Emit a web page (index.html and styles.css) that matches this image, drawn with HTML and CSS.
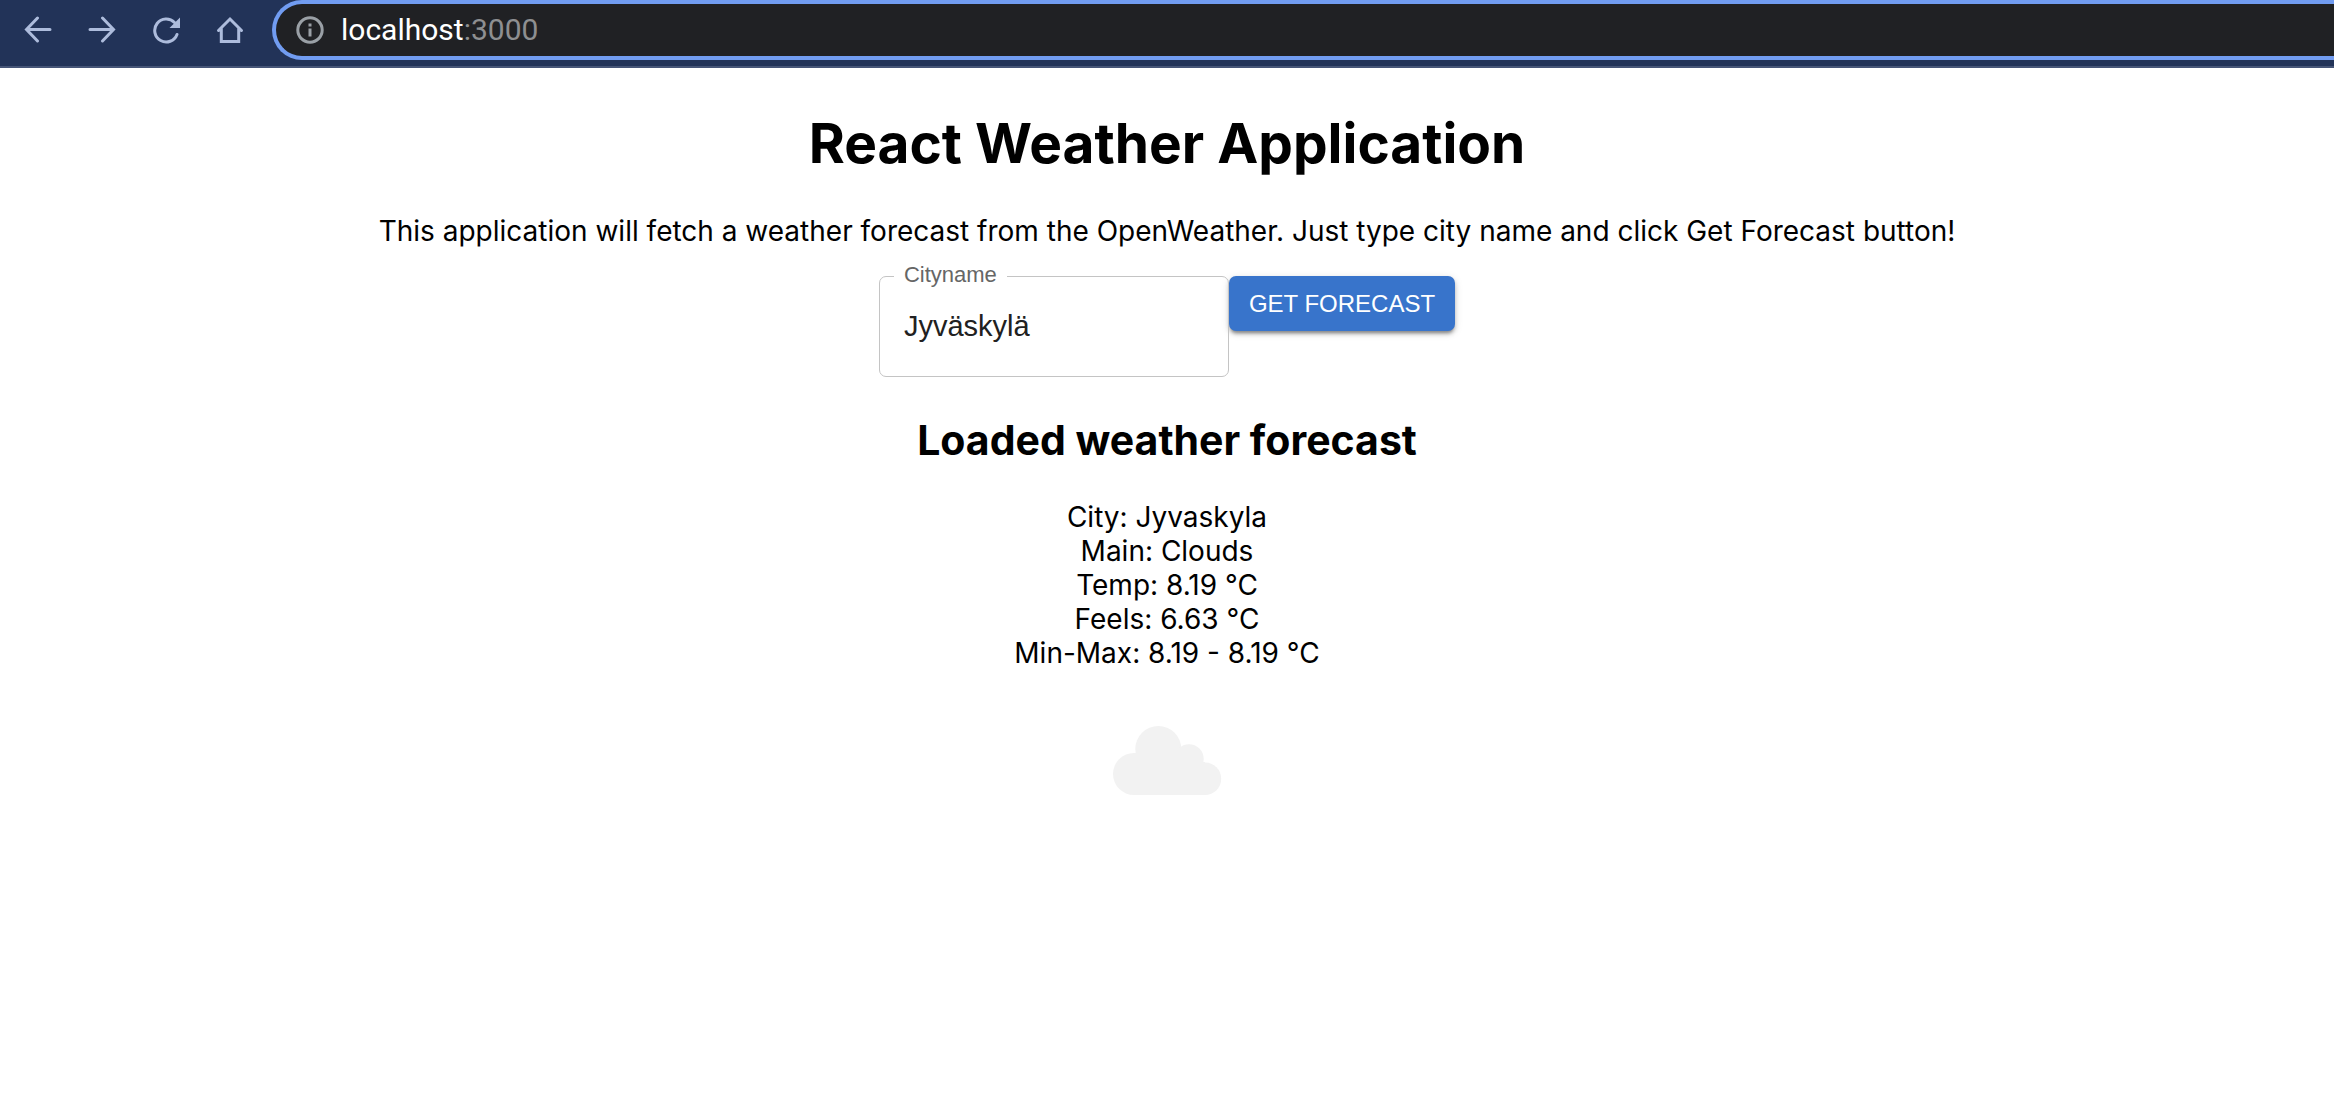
FILE: index.html
```html
<!DOCTYPE html>
<html lang="en">
<head>
  <meta charset="utf-8">
  <title>React Weather Application</title>
  <link rel="stylesheet" href="styles.css">
</head>
<body>
  <header class="toolbar">
    <nav class="toolbar-nav" aria-label="Browser navigation">
      <button class="nav-button" type="button" aria-label="Back">
        <svg class="nav-icon" viewBox="0 0 28 28"><path d="M26 13.500H3M13.500 2 2.500 13.500 13.500 25"/></svg>
      </button>
      <button class="nav-button" type="button" aria-label="Forward">
        <svg class="nav-icon" viewBox="0 0 28 28"><path d="M2 13.500H25M14.500 2 25.500 13.500 14.500 25"/></svg>
      </button>
      <button class="nav-button" type="button" aria-label="Reload">
        <svg class="nav-icon" viewBox="0 0 28 28"><path d="M25 18.500A11.500 11.500 0 1 1 22.500 6.500"/><path class="solid" d="M28 1.500V12H17.500Z"/></svg>
      </button>
      <button class="nav-button" type="button" aria-label="Home">
        <svg class="nav-icon" viewBox="0 0 28 28"><path d="M2.500 14.500 14 3 25.500 14.500M5.300 12V25.500H22.700V12"/></svg>
      </button>
    </nav>
    <div class="address-bar">
      <svg class="info-icon" viewBox="0 0 28 28"><circle cx="14" cy="14" r="12.200"/><path class="solid" d="M12.500 7.500h3v3h-3zM12.500 12.500h3v8h-3z"/></svg>
      <span class="address"><span class="host">localhost</span>:3000</span>
    </div>
  </header>

  <main class="app">
    <h1 class="title">React Weather Application</h1>
    <p class="intro">This application will fetch a weather forecast from the OpenWeather. Just type city name and click Get Forecast button!</p>
    <form class="search">
      <div class="field">
        <label class="field-label" for="city">Cityname</label>
        <input class="field-input" id="city" type="text" value="Jyväskylä">
      </div>
      <button class="submit" type="button">GET FORECAST</button>
    </form>
    <section class="forecast">
      <h2 class="subtitle">Loaded weather forecast</h2>
      <div>City: Jyvaskyla</div>
      <div>Main: Clouds</div>
      <div>Temp: 8.19 °C</div>
      <div>Feels: 6.63 °C</div>
      <div>Min-Max: 8.19 - 8.19 °C</div>
      <svg class="weather-icon" viewBox="0 0 176 176" role="img" aria-label="Clouds">
        <circle cx="55" cy="102" r="21"/>
        <circle cx="79.300" cy="77" r="23"/>
        <circle cx="110" cy="87" r="14.700"/>
        <circle cx="126" cy="106.800" r="16.200"/>
        <path d="M55 81H110V90H126V123H55Z"/>
      </svg>
    </section>
  </main>
</body>
</html>
```

FILE: styles.css
```css
* {
  box-sizing: border-box;
}

body {
  margin: 0;
  background: #fff;
  color: #000;
  font-family: Inter, "Liberation Sans", sans-serif;
  font-size: 28px;
  line-height: 34px;
}

button,
input {
  margin: 0;
  font-family: "Liberation Sans", Arial, sans-serif;
}

.toolbar {
  display: flex;
  height: 68px;
  background: #223358;
  border-bottom: 2px solid #465577;
}

.toolbar-nav {
  display: flex;
  gap: 36px;
  padding: 16px 28px 0 24px;
}

.nav-button {
  width: 28px;
  height: 28px;
  padding: 0;
  border: 0;
  background: none;
}

.nav-icon {
  display: block;
  fill: none;
  stroke: #adbcdc;
  stroke-width: 3;
  stroke-linecap: round;
}

.nav-icon .solid {
  fill: #adbcdc;
  stroke: none;
}

.address-bar {
  display: flex;
  flex: 1;
  align-items: center;
  gap: 17px;
  height: 60px;
  padding-left: 20px;
  border: 4px solid #719cf1;
  border-right: 0;
  border-radius: 30px 0 0 30px;
  background: #202124;
}

.info-icon {
  width: 28px;
  fill: none;
  stroke: #9aa0a6;
  stroke-width: 3;
}

.info-icon .solid {
  fill: #9aa0a6;
  stroke: none;
}

.address {
  color: #8e8f91;
  font-family: Roboto, sans-serif;
  font-size: 30px;
}

.host {
  color: #fff;
}

.app {
  padding: 41px 16px;
  text-align: center;
}

.title {
  margin: 0 0 37px;
  font-size: 55px;
  line-height: 68px;
}

.intro {
  margin: 0 0 28px;
}

.search {
  display: flex;
  justify-content: center;
  align-items: flex-start;
}

.field {
  position: relative;
  width: 350px;
}

.field-label {
  position: absolute;
  top: -13px;
  left: 15px;
  padding: 0 10px;
  background: #fff;
  color: #666;
  font-family: "Liberation Sans", Arial, sans-serif;
  font-size: 22px;
  line-height: 24px;
}

.field-input {
  display: block;
  width: 100%;
  height: 101px;
  padding: 0 24px;
  border: 1px solid #c4c4c4;
  border-radius: 7px;
  background: none;
  color: #212121;
  font-size: 29px;
}

.submit {
  height: 55px;
  padding: 0 20px;
  border: 0;
  border-radius: 7px;
  background: #3874cb;
  color: #fff;
  font-size: 24px;
  box-shadow: 0 4px 3px -2px #0004, 0 3px 4px #0003, 0 2px 8px #0002;
}

.subtitle {
  margin: 38px 0 35px;
  font-size: 41px;
  line-height: 50px;
}

.weather-icon {
  display: block;
  width: 176px;
  margin: 2px auto 0;
  fill: #f2f2f2;
}
```
